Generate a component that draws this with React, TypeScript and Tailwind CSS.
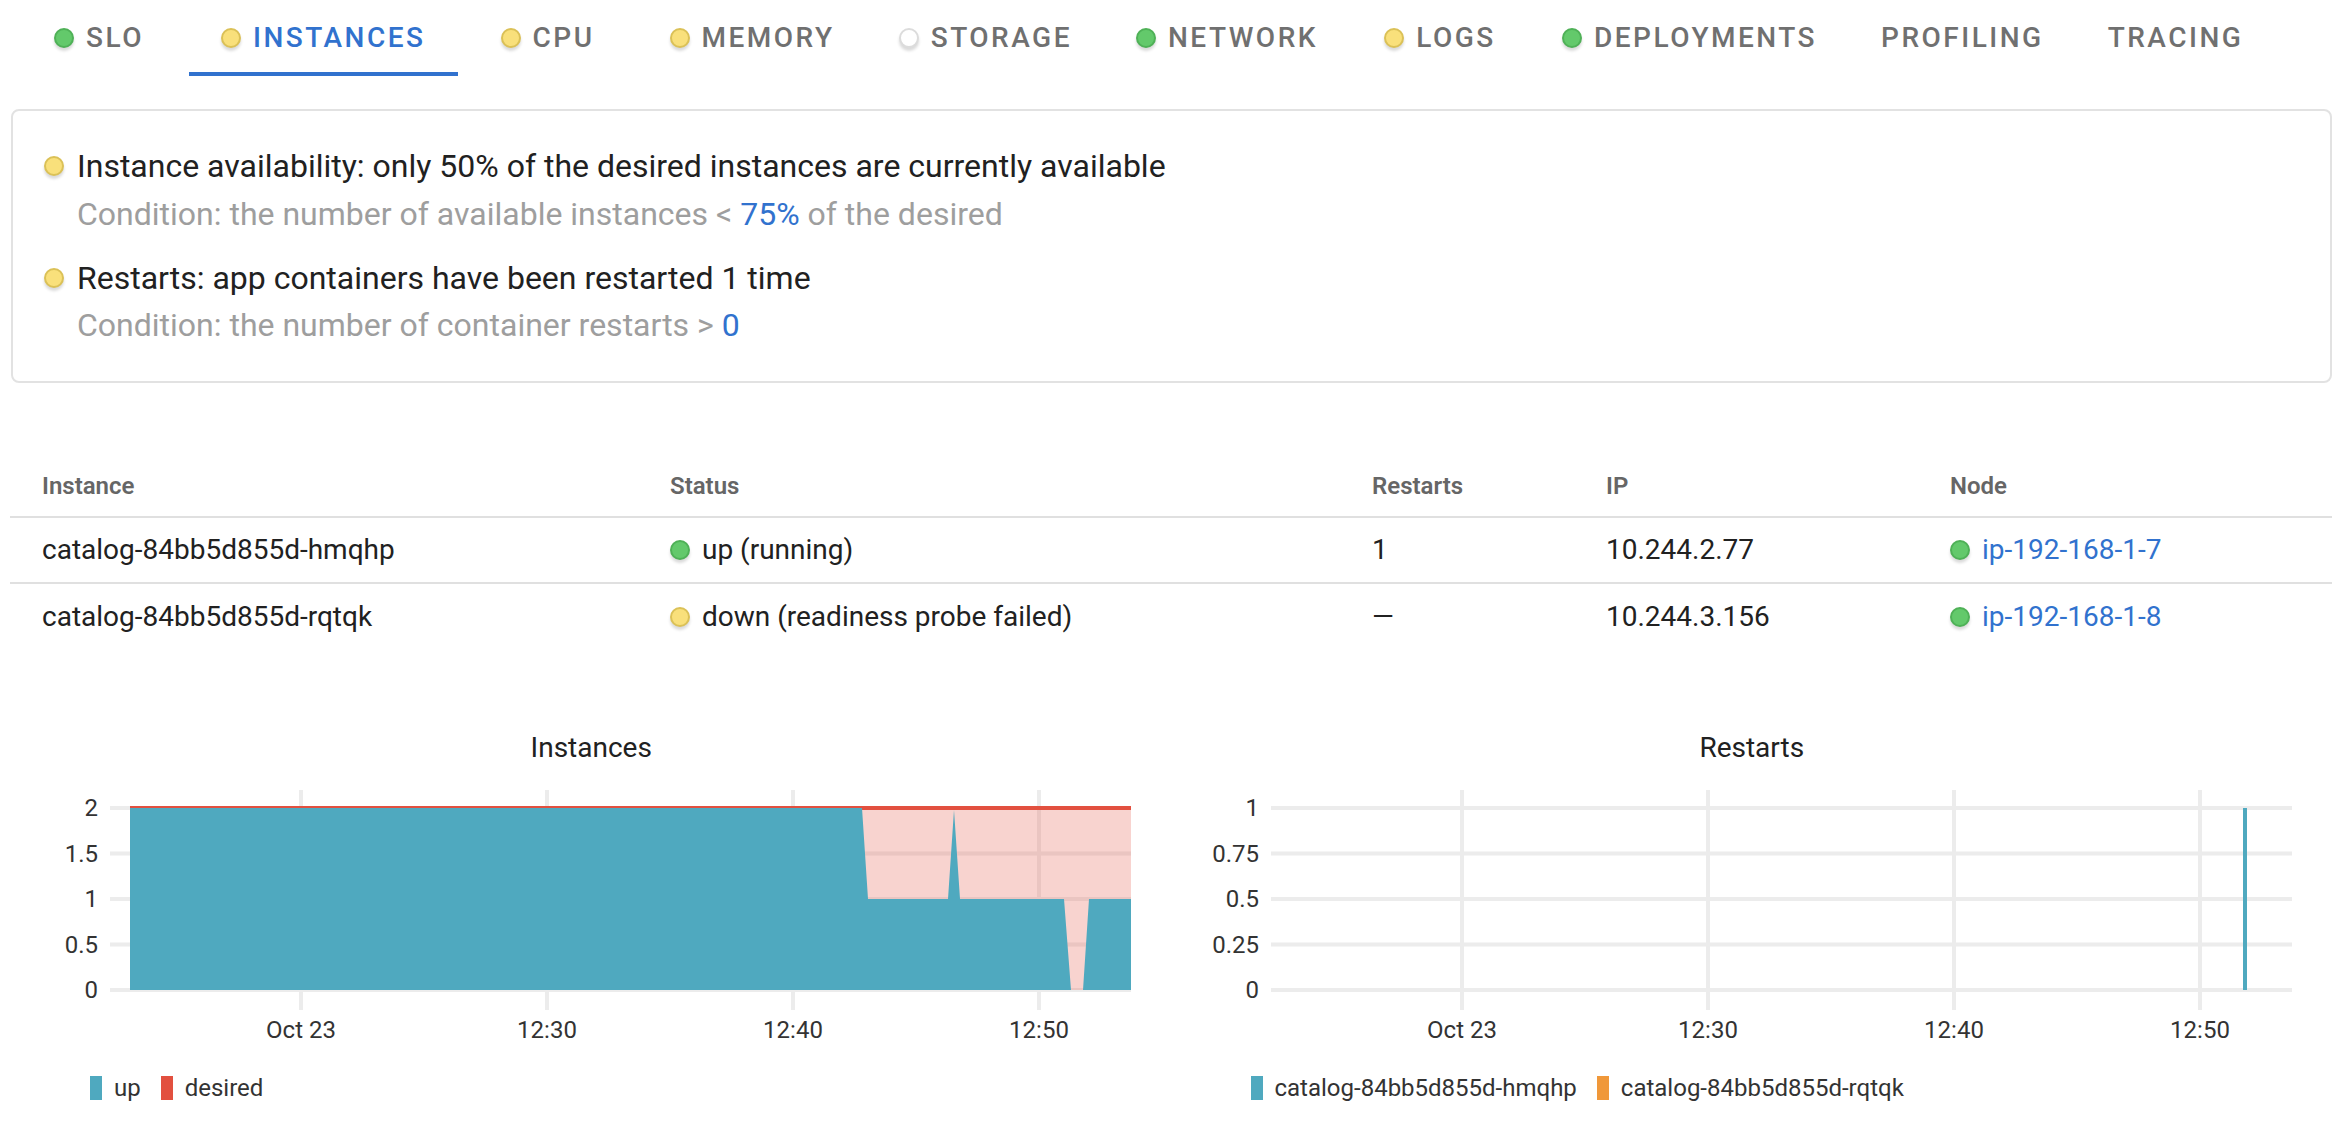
import React from "react";

type DotColor = "green" | "yellow" | "gray";

function Dot({ c }: { c: DotColor }) {
  const cls =
    c === "green"
      ? "bg-[#63c96b] border-[#4fb157]"
      : c === "yellow"
      ? "bg-[#f9e07b] border-[#dbc157]"
      : "bg-white border-[#dcdcdc]";
  return (
    <span
      className={`inline-block w-[20px] h-[20px] rounded-full border-2 shrink-0 shadow-[0_3px_3px_rgba(0,0,0,0.15)] ${cls}`}
    />
  );
}

const tabs: { name: string; dot?: DotColor; active?: boolean }[] = [
  { name: "SLO", dot: "green" },
  { name: "INSTANCES", dot: "yellow", active: true },
  { name: "CPU", dot: "yellow" },
  { name: "MEMORY", dot: "yellow" },
  { name: "STORAGE", dot: "gray" },
  { name: "NETWORK", dot: "green" },
  { name: "LOGS", dot: "yellow" },
  { name: "DEPLOYMENTS", dot: "green" },
  { name: "PROFILING" },
  { name: "TRACING" },
];

const ys = [210, 164.5, 119, 73.5, 28];
const xs = [290, 536, 782, 1028];
const xl = ["Oct 23", "12:30", "12:40", "12:50"];

function Chart({
  title,
  yLabels,
  children,
  legend,
}: {
  title: string;
  yLabels: string[];
  children: React.ReactNode;
  legend: { color: string; label: string }[];
}) {
  return (
    <div className="flex flex-col">
      <div className="h-[40px] flex items-center justify-center text-[28px] text-[#212121]">{title}</div>
      <svg width={1160} height={280} viewBox="0 0 1160 280" className="mt-[12px] block">
        {ys.map((y, i) => (
          <line key={"h" + i} x1={99} x2={1120} y1={y} y2={y} stroke="#ececec" strokeWidth={4} />
        ))}
        {xs.map((x, i) => (
          <line key={"v" + i} x1={x} x2={x} y1={10} y2={230} stroke="#ececec" strokeWidth={4} />
        ))}
        {children}
        {yLabels.map((l, i) => (
          <text
            key={"yl" + i}
            x={87}
            y={ys[i]}
            textAnchor="end"
            dominantBaseline="central"
            fontFamily="Roboto, sans-serif"
            fontSize={24}
            fill="#333"
          >
            {l}
          </text>
        ))}
        {xl.map((l, i) => (
          <text
            key={"xl" + i}
            x={xs[i]}
            y={250}
            textAnchor="middle"
            dominantBaseline="central"
            fontFamily="Roboto, sans-serif"
            fontSize={24}
            fill="#333"
          >
            {l}
          </text>
        ))}
      </svg>
      <div className="mt-[16px] h-[24px] flex items-center gap-[20px] pl-[79px]">
        {legend.map((l) => (
          <div key={l.label} className="flex items-center gap-[12px]">
            <span className="inline-block w-[12px] h-[24px]" style={{ background: l.color }} />
            <span className="text-[24px] text-[#333] leading-none">{l.label}</span>
          </div>
        ))}
      </div>
    </div>
  );
}

const rows = [
  {
    name: "catalog-84bb5d855d-hmqhp",
    dot: "green" as DotColor,
    status: "up (running)",
    restarts: "1",
    ip: "10.244.2.77",
    node: "ip-192-168-1-7",
  },
  {
    name: "catalog-84bb5d855d-rqtqk",
    dot: "yellow" as DotColor,
    status: "down (readiness probe failed)",
    restarts: "—",
    ip: "10.244.3.156",
    node: "ip-192-168-1-8",
  },
];

export default function App() {
  return (
    <div className="w-[2344px] min-h-[1134px] bg-white font-[Roboto,sans-serif] text-[#212121]">
      {/* Tabs */}
      <div className="h-[76px] flex pl-[9px]">
        {tabs.map((t) => (
          <div
            key={t.name}
            className={`relative min-w-[180px] px-[32px] flex items-center justify-center gap-[12px] ${
              t.active ? "text-[#3172ce]" : "text-[#707070]"
            }`}
          >
            {t.dot && <Dot c={t.dot} />}
            <span className="text-[28px] font-medium tracking-[2.5px] uppercase leading-none">{t.name}</span>
            {t.active && <span className="absolute left-0 right-0 bottom-0 h-[4px] bg-[#3172ce]" />}
          </div>
        ))}
      </div>

      {/* Alert box */}
      <div className="mt-[33px] ml-[11px] mr-[12px] border-2 border-[#e2e2e2] rounded-[8px] pt-[31px] pb-[33px] pl-[31px]">
        <div className="flex items-center h-[48px] gap-[13px] text-[32px] text-[#212121]">
          <Dot c="yellow" />
          <span>Instance availability: only 50% of the desired instances are currently available</span>
        </div>
        <div className="h-[48px] flex items-center pl-[33px] text-[32px] text-[#9e9e9e]">
          <span>
            Condition: the number of available instances &lt; <span className="text-[#3172ce]">75%</span> of the desired
          </span>
        </div>
        <div className="mt-[16px] flex items-center h-[48px] gap-[13px] text-[32px] text-[#212121]">
          <Dot c="yellow" />
          <span>Restarts: app containers have been restarted 1 time</span>
        </div>
        <div className="h-[46px] flex items-center pl-[33px] text-[32px] text-[#9e9e9e]">
          <span>
            Condition: the number of container restarts &gt; <span className="text-[#3172ce]">0</span>
          </span>
        </div>
      </div>

      {/* Table */}
      <div className="mt-[73px] ml-[10px] mr-[12px]">
        <div className="grid grid-cols-[628px_702px_234px_344px_1fr] h-[62px] items-center border-b-2 border-[#e0e0e0] text-[24px] font-semibold text-[#666]">
          <div className="px-[32px]">Instance</div>
          <div className="px-[32px]">Status</div>
          <div className="px-[32px]">Restarts</div>
          <div className="px-[32px]">IP</div>
          <div className="px-[32px]">Node</div>
        </div>
        {rows.map((r, i) => (
          <div
            key={r.name}
            className={`grid grid-cols-[628px_702px_234px_344px_1fr] h-[66px] items-center text-[28px] text-[#212121] ${
              i === 0 ? "border-b-2 border-[#e0e0e0]" : ""
            }`}
          >
            <div className="px-[32px]">{r.name}</div>
            <div className="px-[32px] flex items-center gap-[12px]">
              <Dot c={r.dot} />
              <span>{r.status}</span>
            </div>
            <div className="px-[32px]">{r.restarts}</div>
            <div className="px-[32px]">{r.ip}</div>
            <div className="px-[32px] flex items-center gap-[12px]">
              <Dot c="green" />
              <span className="text-[#3172ce]">{r.node}</span>
            </div>
          </div>
        ))}
      </div>

      {/* Charts */}
      <div className="mt-[78px] ml-[11px] mr-[12px] grid grid-cols-2">
        <Chart
          title="Instances"
          yLabels={["0", "0.5", "1", "1.5", "2"]}
          legend={[
            { color: "#4fa9bf", label: "up" },
            { color: "#e2503f", label: "desired" },
          ]}
        >
          <rect x={851} y={28} width={269} height={182} fill="rgba(226,80,63,0.25)" />
          <line x1={119} x2={1120} y1={28} y2={28} stroke="#e2503f" strokeWidth={4} />
          <polygon
            points="119,210 119,28 851,28 857,119 937,119 943,30 949,119 1053,119 1060,210 1072,210 1078,119 1120,119 1120,210"
            fill="#4fa9bf"
          />
        </Chart>
        <Chart
          title="Restarts"
          yLabels={["0", "0.25", "0.5", "0.75", "1"]}
          legend={[
            { color: "#4fa9bf", label: "catalog-84bb5d855d-hmqhp" },
            { color: "#f0983a", label: "catalog-84bb5d855d-rqtqk" },
          ]}
        >
          <line x1={1073} x2={1073} y1={28} y2={210} stroke="#4fa9bf" strokeWidth={4} />
        </Chart>
      </div>
    </div>
  );
}
